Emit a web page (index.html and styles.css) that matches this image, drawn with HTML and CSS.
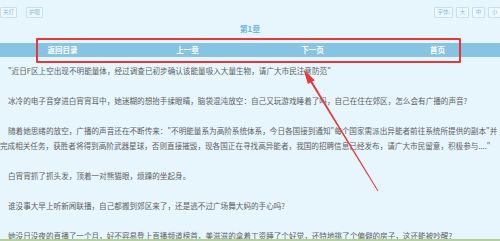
FILE: index.html
```html
<!DOCTYPE html>
<html lang="zh-CN">
<head>
  <meta charset="UTF-8">
  <meta name="viewport" content="width=device-width, initial-scale=1.0">
  <title>第1章</title>
  <link rel="stylesheet" href="styles.css">
</head>
<body>
  <div class="read-page">
    <div class="top-bar">
      <div class="btn-group">
        <span class="mini-btn">关灯</span>
        <span class="mini-btn">护眼</span>
      </div>
      <div class="btn-group right">
        <span class="mini-btn">字体:</span>
        <span class="mini-btn">大</span>
        <span class="mini-btn">中</span>
        <span class="mini-btn">小</span>
      </div>
    </div>

    <h1 class="chapter-title">第1章</h1>

    <div class="chapter-nav">
      <a href="#">返回目录</a>
      <a href="#">上一章</a>
      <a href="#">下一页</a>
      <a href="#">首页</a>
    </div>

    <div class="chapter-content">
      <p>"近日F区上空出现不明能量体，经过调查已初步确认该能量吸入大量生物，请广大市民注意防范"</p>
      <p>冰冷的电子音穿进白宵宵耳中，她迷糊的想抬手揉眼睛，脑袋混沌放空：自己又玩游戏睡着了吗，自己在住在郊区，怎么会有广播的声音?</p>
      <p>随着她思绪的放空，广播的声音还在不断传来："不明能量系为高阶系统体系，今日各国接到通知"每个国家需派出异能者前往系统所提供的副本"并完成相关任务，获胜者将得到高阶武器星球，否则直接摧毁，现各国正在寻找高异能者，我国的招聘信息已经发布，请广大市民留意，积极参与...."</p>
      <p>白宵宵抓了抓头发，顶着一对熊猫眼，烦躁的坐起身。</p>
      <p>谁没事大早上听新闻联播，自己都搬到郊区来了，还是逃不过广场舞大妈的手心吗?</p>
      <p>她没日没夜的直播了一个月，好不容易登上直播频道榜首，美滋滋的拿着工资睡了个好觉，还特地挑了个偏僻的房子，这还能被吵醒?</p>
    </div>
  </div>

  <!-- 标注 -->
  <div class="mark-box"></div>
  <svg class="mark-arrow" width="500" height="241" viewBox="0 0 500 241">
    <polygon points="303.5,69.5 314.8,80.2 312.3,81.5 378.4,190.8 377.6,191.2 310.5,82.6 307.9,84.1" fill="#e5383b"/>
  </svg>
  <div class="bottom-line"></div>
</body>
</html>
```

FILE: styles.css
```css
body {
  margin: 0;
  background: #e7f6fd;
  font-family: "Noto Sans CJK SC", "Noto Sans", sans-serif;
  color: #606060;
}
.read-page {
  width: 500px;
  height: 241px;
  overflow: hidden;
}
.top-bar {
  display: flex;
  justify-content: space-between;
  padding-top: 7px;
  height: 10px;
}
.btn-group {
  display: flex;
  gap: 9px;
}
.btn-group.right {
  gap: 3px;
  margin-right: -1px;
}
.mini-btn {
  display: block;
  height: 9px;
  line-height: 9px;
  padding: 0 2px;
  min-width: 7px;
  text-align: center;
  font-size: 5.5px;
  color: #86bedd;
  border: 1px solid #c9e0ec;
  border-radius: 1px;
  background: #eef9fe;
}
.chapter-title {
  margin: 5px 0 0;
  line-height: 13px;
  height: 13px;
  text-align: center;
  font-size: 8px;
  font-weight: bold;
  color: #6cb4de;
}
.chapter-nav {
  display: grid;
  grid-template-columns: repeat(4, 1fr);
  margin-top: 8px;
  height: 14px;
  line-height: 14px;
  background: #87c4e4;
}
.chapter-nav a {
  text-align: center;
  color: #fff;
  font-size: 7.5px;
  font-weight: bold;
  text-decoration: none;
}
.chapter-content {
  padding-top: 6px;
  font-size: 7.6px;
  line-height: 15px;
}
.chapter-content p {
  margin: 0 0 15px;
  text-indent: 8px;
}
.mark-box {
  position: absolute;
  left: 36px;
  top: 38px;
  width: 421px;
  height: 21px;
  border: 2px solid #e5383b;
  border-radius: 1px;
}
.mark-arrow {
  position: absolute;
  left: 0;
  top: 0;
}
.bottom-line {
  position: fixed;
  left: 0;
  right: 0;
  bottom: 0;
  height: 2px;
  background: #b3d29a;
}
```
